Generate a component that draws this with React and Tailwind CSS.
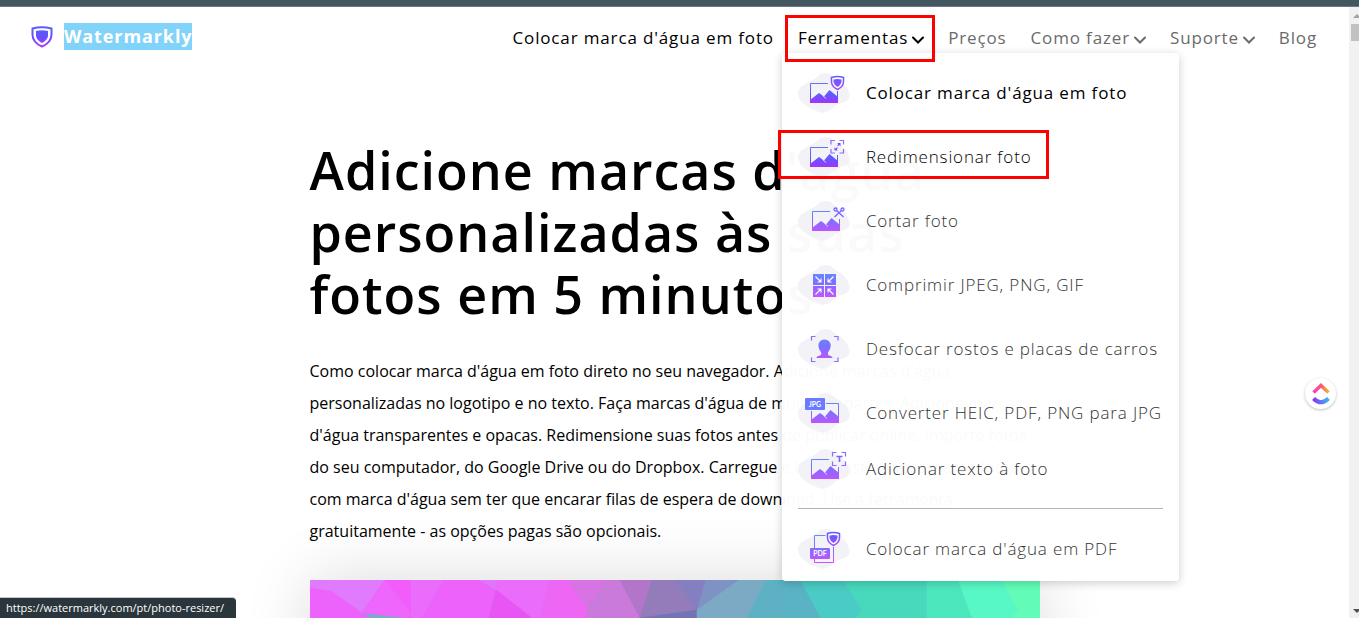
import React from "react";

const gradients = (
  <svg width="0" height="0" className="absolute" aria-hidden="true">
    <defs>
      <linearGradient id="brand" x1="0" y1="0" x2="0" y2="40" gradientUnits="userSpaceOnUse">
        <stop offset="0.1" stopColor="#5b86ff" />
        <stop offset="0.52" stopColor="#5a5cff" />
        <stop offset="0.75" stopColor="#a333ff" />
      </linearGradient>
      <linearGradient id="brandSoft" x1="0" y1="0" x2="0" y2="40" gradientUnits="userSpaceOnUse">
        <stop offset="0.1" stopColor="#5b93ff" />
        <stop offset="0.45" stopColor="#7a70ff" />
        <stop offset="0.8" stopColor="#c553ff" />
      </linearGradient>
      <linearGradient id="logo" x1="0" y1="0" x2="0" y2="22" gradientUnits="userSpaceOnUse">
        <stop offset="0.1" stopColor="#5a5cff" />
        <stop offset="0.5" stopColor="#6550ff" />
        <stop offset="0.9" stopColor="#a83aff" />
      </linearGradient>
      <linearGradient id="badge" x1="0" y1="3" x2="0" y2="17" gradientUnits="userSpaceOnUse">
        <stop offset="0" stopColor="#5b5cff" />
        <stop offset="1" stopColor="#a24bff" />
      </linearGradient>
    </defs>
  </svg>
);

function Blob({ children }) {
  return (
    <svg viewBox="0 0 52 40" width="52" height="40" className="shrink-0 tracking-normal" aria-hidden="true">
      <path
        d="M20 3C24-1 31-1 35 3C38 6 42 7 45 10C50 15 53 21 51 25C49 30 41 29 37 33C32 38 27 41 21 39C14 36 8 34 3 28C-1 22-1 17 4 13C9 9 16 8 20 3Z"
        fill="#f2f2f7"
      />
      {children}
    </svg>
  );
}

function Landscape({ fill }) {
  return (
    <g>
      <path d="M12 27L21 20L26 23.5L31.5 17L40 24V30H12Z" fill={fill} />
      <path d="M24.5 22.5L28 25.5" stroke="#f2f2f7" strokeWidth="0.8" />
    </g>
  );
}

function Picture({ fill = "url(#brandSoft)", x = 0 }) {
  return (
    <g transform={`translate(${x} 0)`}>
      <path d="M30 10.5H12.5V29.5H39.5V18" fill="none" stroke={fill} />
      <Landscape fill={fill} />
    </g>
  );
}

function SmallShield({ x = 0 }) {
  return (
    <g transform={`translate(${x} 0)`}>
      <path
        d="M33.5 4.5Q39.5 2.5 45.5 4.5V9Q45 14 39.5 16.500Q34 14 33.5 9Z"
        fill="#fff"
        stroke="url(#badge)"
        strokeWidth="1.500"
      />
      <path d="M35.500 6.500Q39.500 5.500 43.500 6.500V9Q43 12 39.500 14Q36 12 35.500 9Z" fill="url(#badge)" />
    </g>
  );
}

function Corners({ x, y, w, h, l = 4 }) {
  return (
    <path
      d={`M${x} ${y + l}V${y}H${x + l}M${x + w - l} ${y}H${x + w}V${y + l}M${x + w} ${y + h - l}V${y + h}H${x + w - l}M${x + l} ${y + h}H${x}V${y + h - l}`}
      fill="none"
      stroke="#8f6bff"
      strokeWidth="1.2"
    />
  );
}

function WatermarkIcon() {
  return (
    <Blob>
      <Picture fill="url(#brand)" />
      <SmallShield />
    </Blob>
  );
}

function ResizeIcon() {
  return (
    <Blob>
      <Picture fill="url(#brand)" />
      <Corners x={33} y={3.5} w={12.5} h={12.5} />
      <path
        d="M36.500 13.500V10.200L37.700 11.400L39 10.200L39.800 11L38.600 12.300L39.800 13.500ZM42.500 6V9.300L41.300 8.100L40 9.300L39.200 8.500L40.400 7.200L39.200 6Z"
        fill="#6b4dff"
      />
    </Blob>
  );
}

function CropIcon() {
  return (
    <Blob>
      <Picture x={2} />
      <g fill="none" stroke="#7a62ff" strokeWidth="1.3">
        <circle cx="37.500" cy="8.500" r="1.500" />
        <circle cx="44.500" cy="8.500" r="1.500" />
        <path d="M38.500 9.500L45.500 16M43.500 9.500L36.500 16" />
      </g>
    </Blob>
  );
}

function CompressIcon() {
  return (
    <Blob>
      <g fill="url(#brandSoft)">
        <rect x="15" y="9" width="11" height="11" />
        <rect x="27" y="9" width="11" height="11" />
        <rect x="15" y="21" width="11" height="11" />
        <rect x="27" y="21" width="11" height="11" />
      </g>
      <path
        d="M17.500 11.500L23 17M23 13.500V17H19.500M35.500 11.500L30 17M30 13.500V17H33.500M17.500 29.500L23 24M19.500 24H23V27.500M35.500 29.500L30 24M33.500 24H30V27.500"
        fill="none"
        stroke="#fff"
        strokeWidth="1.1"
      />
    </Blob>
  );
}

function FaceIcon() {
  return (
    <Blob>
      <Corners x={13.5} y={7.5} w={26.5} h={25} l={4} />
      <path
        d="M26.500 10.500C30.500 10.500 33 13.500 32.700 17C32.500 20 31 22 30 23.500V25.500C31 27.500 34.500 26.500 34.500 29H18.500C18.500 26.500 22 27.500 23.200 25.500V23.500C22 22 20.800 20 20.500 17C20.200 13.500 22.500 10.500 26.500 10.500Z"
        fill="url(#brandSoft)"
      />
    </Blob>
  );
}

function ConvertIcon() {
  return (
    <Blob>
      <path d="M28 10.500H40.500V29.500H13.500V18" fill="none" stroke="url(#brandSoft)" />
      <g transform="translate(1 0)">
        <Landscape fill="url(#brandSoft)" />
      </g>
      <rect x="7" y="5" width="20" height="12" rx="1" fill="#6a7bff" />
      <text x="17" y="13.5" textAnchor="middle" fontSize="7" fontWeight="700" fill="#fff" className="font-[Lato]">
        JPG
      </text>
    </Blob>
  );
}

function TextIcon() {
  return (
    <Blob>
      <Picture x={1} />
      <Corners x={34.5} y={3.5} w={13} h={13} />
      <path d="M38.500 7.500H44.500M41.500 7.500V13" stroke="#7a62ff" strokeWidth="1.600" fill="none" />
    </Blob>
  );
}

function PdfIcon() {
  return (
    <Blob>
      <path d="M27.500 6.500H16.500V33.500H35.500V18" fill="none" stroke="url(#brandSoft)" />
      <rect x="12" y="19" width="20" height="11" rx="1" fill="url(#brandSoft)" />
      <text x="22" y="27" textAnchor="middle" fontSize="7" fontWeight="700" fill="#fff" className="font-[Lato]">
        PDF
      </text>
      <SmallShield x={-4} />
    </Blob>
  );
}

const tools = [
  { label: "Colocar marca d'água em foto", icon: <WatermarkIcon />, className: "mb-4 font-medium text-black" },
  { label: "Redimensionar foto", icon: <ResizeIcon />, className: "mb-4 font-light text-black" },
  { label: "Cortar foto", icon: <CropIcon />, className: "mb-4 font-light text-[#333]" },
  { label: "Comprimir JPEG, PNG, GIF", icon: <CompressIcon />, className: "mb-4 font-light text-[#333]" },
  { label: "Desfocar rostos e placas de carros", icon: <FaceIcon />, className: "mb-4 font-light text-[#333]" },
  { label: "Converter HEIC, PDF, PNG para JPG", icon: <ConvertIcon />, className: "mb-2 font-light text-[#333]" },
  { label: "Adicionar texto à foto", icon: <TextIcon />, className: "font-light text-[#333]" },
];

function MenuLink({ label, icon, className }) {
  return (
    <li>
      <a href="#" className={`flex h-12 items-center gap-4 whitespace-nowrap ${className}`}>
        {icon}
        <span>{label}</span>
      </a>
    </li>
  );
}

function Chevron() {
  return (
    <svg viewBox="0 0 12 8" width="12" height="8" className="mt-1" aria-hidden="true">
      <path d="M1 1.500L6 6.500L11 1.500" fill="none" stroke="currentColor" strokeWidth="2" strokeLinecap="round" />
    </svg>
  );
}

function ToolsMenu() {
  return (
    <div className="absolute top-[27px] -left-4 z-10 w-[397px] rounded-sm bg-white/98 p-4 pb-2 shadow-[0_2px_10px_rgba(0,0,0,0.2)]">
      <ul>
        {tools.map((tool) => (
          <MenuLink key={tool.label} {...tool} />
        ))}
      </ul>
      <hr className="mt-[15px] mb-4 border-[#b3b3b3]" />
      <ul>
        <MenuLink label="Colocar marca d'água em PDF" icon={<PdfIcon />} className="font-light text-[#333]" />
      </ul>
    </div>
  );
}

function Header() {
  return (
    <header className="flex h-[62px] items-center justify-between pr-8 pl-[31px]">
      <a href="#" className="flex items-center gap-[11px] pb-[3px]">
        <svg viewBox="0 0 22 22" width="22" height="22" aria-hidden="true">
          <path
            d="M1.500 2.500Q11 0 20.500 2.500V9Q20 17 11 20.500Q2 17 1.500 9Z"
            fill="#fff"
            stroke="url(#logo)"
            strokeWidth="2"
          />
          <path d="M5 5Q11 3.500 17 5V10Q16.500 14 11 17Q5.500 14 5 10Z" fill="url(#logo)" />
        </svg>
        <span className="bg-[#82d3fa] text-lg leading-[27px] font-bold tracking-wider text-white">
          Watermarkly
        </span>
      </a>
      <nav>
        <ul className="flex gap-6 text-[17px] leading-6 font-medium tracking-wider whitespace-nowrap text-[#6b6b6b]">
          <li>
            <a href="#" className="text-black">Colocar marca d'água em foto</a>
          </li>
          <li className="relative">
            <button type="button" className="flex items-center gap-1 text-black">
              Ferramentas <Chevron />
            </button>
            <ToolsMenu />
            <div className="pointer-events-none absolute -top-[11px] -left-[13px] z-20 h-[47px] w-[150px] border-3 border-[#f00]" />
            <div className="pointer-events-none absolute top-[104px] -left-5 z-20 h-[49px] w-[271px] border-3 border-[#f00]" />
          </li>
          <li>
            <a href="#">Preços</a>
          </li>
          <li>
            <button type="button" className="flex items-center gap-1">
              Como fazer <Chevron />
            </button>
          </li>
          <li>
            <button type="button" className="flex items-center gap-1">
              Suporte <Chevron />
            </button>
          </li>
          <li>
            <a href="#">Blog</a>
          </li>
        </ul>
      </nav>
    </header>
  );
}

const facets = [
  ["0,0 75,0 52,33 21,11 0,8", "#e07bfd"],
  ["75,0 105,0 105,38 52,33", "#f15cfa"],
  ["0,8 21,11 52,33 60,38 0,38", "#ee62fc"],
  ["75,0 101,33 98,38 52,33", "#ee66fc"],
  ["101,0 133,0 112,38 101,38", "#ea6cfb"],
  ["133,0 169,0 186,10 179,38 112,38", "#ee62fc"],
  ["169,0 188,0 186,10", "#e076fb"],
  ["188,0 240,0 230,38 222,38 186,10", "#ea6cfb"],
  ["186,10 222,38 179,38", "#e954f5"],
  ["240,0 258,0 277,28 277,38 222,38 230,38", "#ee66f4"],
  ["258,0 298,0 277,28", "#d873e4"],
  ["298,0 310,0 330,38 277,38 277,28", "#c97adb"],
  ["310,0 342,0 330,38", "#b275ca"],
  ["342,0 366,0 387,30 330,38", "#937cb9"],
  ["366,0 396,0 387,30", "#857fc2"],
  ["330,38 387,30 387,38", "#7473b3"],
  ["396,0 429,0 387,30", "#7f92c4"],
  ["429,0 456,0 437,38 387,38 387,30", "#7ca9c3"],
  ["456,0 470,0 475,38 437,38", "#5eb1c3"],
  ["470,0 490,0 511,38 475,38", "#5ab3c4"],
  ["490,0 533,0 552,30 545,38 511,38", "#4bcbc5"],
  ["533,0 617,0 617,38 545,38 552,30", "#48d9bd"],
  ["617,0 648,0 662,38 617,38", "#4de7be"],
  ["648,0 691,0 708,30 700,38 662,38", "#57f8c5"],
  ["691,0 730,0 730,38 700,38 708,30", "#62fcb8"],
];

function HeroPicture() {
  return (
    <svg viewBox="0 0 730 400" className="mt-[33px] block w-full shadow-[0_0_60px_rgba(0,0,0,0.15)]" role="img">
      <rect width="730" height="400" fill="#6fb0c8" />
      {facets.map(([points, fill]) => (
        <polygon key={points} points={points} fill={fill} stroke={fill} strokeWidth="0.5" />
      ))}
    </svg>
  );
}

export default function App() {
  return (
    <div className="flex h-screen flex-col overflow-hidden bg-white font-['Open_Sans',sans-serif] text-black">
      {gradients}
      <div className="h-[7px] shrink-0 border-b border-[#6a7983] bg-[#445660]" />
      <div className="flex min-h-0 flex-1">
        <div className="min-w-0 flex-1">
          <Header />
          <main className="mx-auto mt-[70px] max-w-[730px]">
            <h1 className="text-[52px] leading-[62px] font-semibold tracking-[1px] whitespace-nowrap">
              Adicione marcas d'água
              <br />
              personalizadas às suas
              <br />
              fotos em 5 minutos
            </h1>
            <p className="mt-[30px] text-base leading-8 whitespace-nowrap">
              Como colocar marca d'água em foto direto no seu navegador. Adicione marcas d'água
              <br />
              personalizadas no logotipo e no texto. Faça marcas d'água de múltiplas partes. Adicione marcas
              <br />
              d'água transparentes e opacas. Redimensione suas fotos antes de publicar online. Importe fotos
              <br />
              do seu computador, do Google Drive ou do Dropbox. Carregue e baixe instantaneamente fotos
              <br />
              com marca d'água sem ter que encarar filas de espera de download. Use a ferramenta
              <br />
              gratuitamente - as opções pagas são opcionais.
            </p>
            <HeroPicture />
          </main>
        </div>
        <div className="flex w-[10px] flex-col justify-between overflow-hidden bg-[#f1f1f1] pt-[7px] pb-[5px]">
          <div className="flex flex-col gap-[6px]">
            <svg viewBox="0 0 10 4" width="10" height="4" aria-hidden="true">
              <path d="M4 4L8 0L12 4Z" fill="#a3a3a3" />
            </svg>
            <div className="ml-[2px] h-[17px] bg-[#c1c1c1]" />
          </div>
          <svg viewBox="0 0 10 4" width="10" height="4" aria-hidden="true">
            <path d="M4 0L8 4L12 0Z" fill="#505050" />
          </svg>
        </div>
      </div>
      <button
        type="button"
        aria-label="ClickUp"
        className="absolute top-[378px] right-[23px] flex size-[31px] items-center justify-center rounded-full bg-white shadow-[0_1px_3px_rgba(0,0,0,0.25)]"
      >
        <svg viewBox="0 0 18 22" width="18" height="22" aria-hidden="true">
          <defs>
            <linearGradient id="roof">
              <stop offset="0" stopColor="#ff3fc5" />
              <stop offset="0.5" stopColor="#f9567b" />
              <stop offset="1" stopColor="#f0b62c" />
            </linearGradient>
            <linearGradient id="smile">
              <stop offset="0" stopColor="#8433fb" />
              <stop offset="1" stopColor="#3fb4f0" />
            </linearGradient>
          </defs>
          <path d="M1.500 9.500L9 2.500L16.500 9.500" fill="none" stroke="url(#roof)" strokeWidth="3.5" />
          <path d="M1.500 15.500Q9 23 16.500 15.500" fill="none" stroke="url(#smile)" strokeWidth="4" />
        </svg>
      </button>
      <div className="absolute bottom-0 left-0 rounded-tr-sm border-t border-[#c3c7ca] bg-[#2a353c] pr-3 pl-[6px] text-[11px] leading-5 text-white">
        https://watermarkly.com/pt/photo-resizer/
      </div>
    </div>
  );
}
